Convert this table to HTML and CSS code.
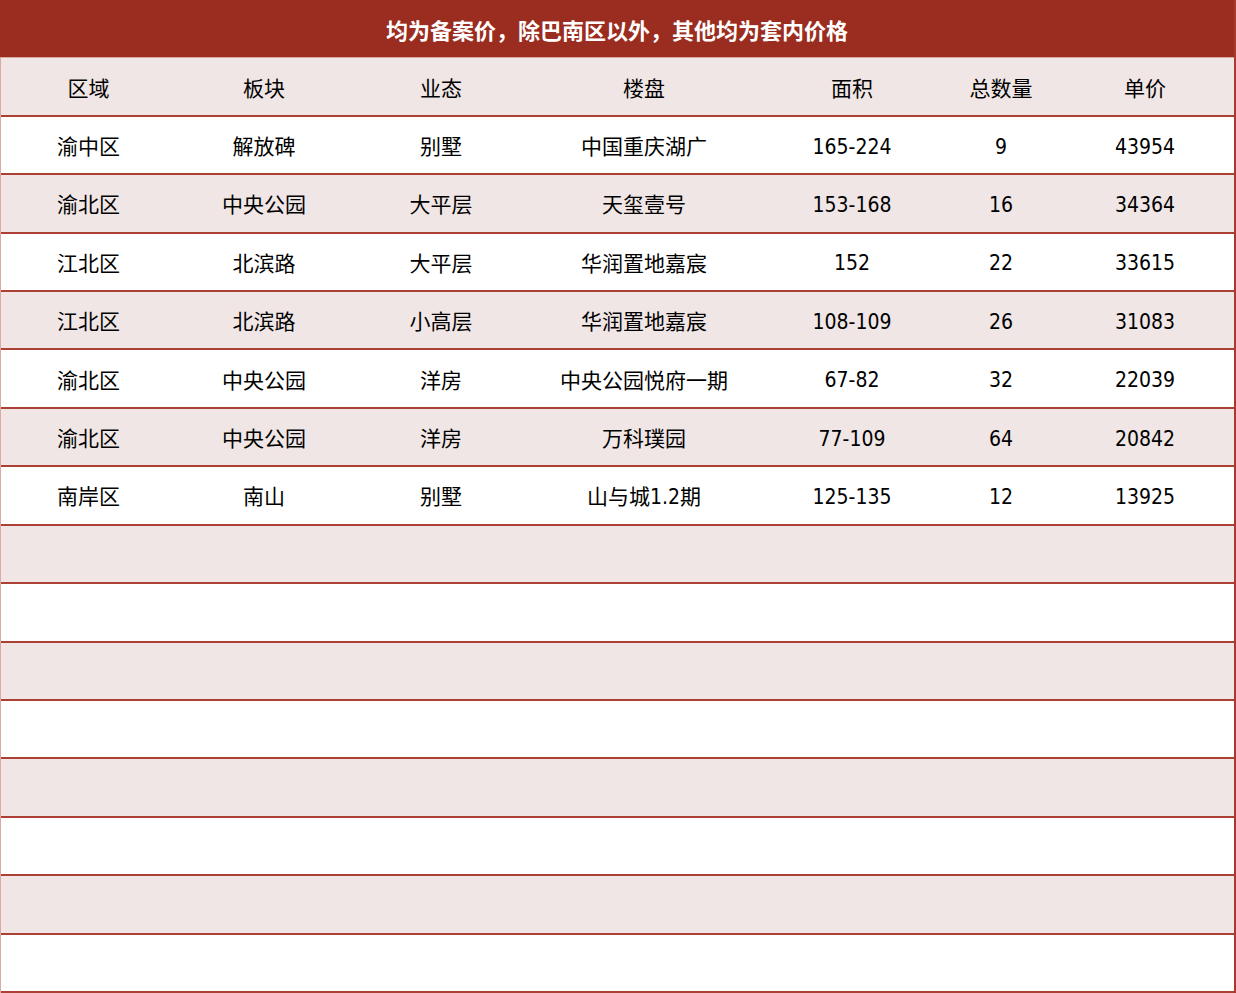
FILE: index.html
```html
<!DOCTYPE html>
<html lang="zh-CN">
<head>
<meta charset="utf-8">
<title>备案价</title>
<link rel="stylesheet" href="styles.css">
</head>
<body>
<div class="sheet">
  <div class="title">均为备案价，除巴南区以外，其他均为套内价格</div>
  <div class="row head">
    <div>区域</div><div>板块</div><div>业态</div><div>楼盘</div><div>面积</div><div>总数量</div><div>单价</div>
  </div>
  <div class="row">
    <div>渝中区</div><div>解放碑</div><div>别墅</div><div>中国重庆湖广</div><div class="num">165-224</div><div class="num">9</div><div class="num">43954</div>
  </div>
  <div class="row alt">
    <div>渝北区</div><div>中央公园</div><div>大平层</div><div>天玺壹号</div><div class="num">153-168</div><div class="num">16</div><div class="num">34364</div>
  </div>
  <div class="row">
    <div>江北区</div><div>北滨路</div><div>大平层</div><div>华润置地嘉宸</div><div class="num">152</div><div class="num">22</div><div class="num">33615</div>
  </div>
  <div class="row alt">
    <div>江北区</div><div>北滨路</div><div>小高层</div><div>华润置地嘉宸</div><div class="num">108-109</div><div class="num">26</div><div class="num">31083</div>
  </div>
  <div class="row">
    <div>渝北区</div><div>中央公园</div><div>洋房</div><div>中央公园悦府一期</div><div class="num">67-82</div><div class="num">32</div><div class="num">22039</div>
  </div>
  <div class="row alt">
    <div>渝北区</div><div>中央公园</div><div>洋房</div><div>万科璞园</div><div class="num">77-109</div><div class="num">64</div><div class="num">20842</div>
  </div>
  <div class="row">
    <div>南岸区</div><div>南山</div><div>别墅</div><div>山与城<span class="n">1.2</span>期</div><div class="num">125-135</div><div class="num">12</div><div class="num">13925</div>
  </div>
  <div class="row alt empty"></div>
  <div class="row empty"></div>
  <div class="row alt empty"></div>
  <div class="row empty"></div>
  <div class="row alt empty"></div>
  <div class="row empty"></div>
  <div class="row alt empty"></div>
  <div class="row empty"></div>
</div>
</body>
</html>
```

FILE: styles.css
```css
html, body {
  margin: 0;
  padding: 0;
  background: #ffffff;
}

.sheet {
  width: 1236px;
  height: 993px;
  box-sizing: border-box;
  display: grid;
  grid-template-rows: repeat(17, 1fr);
  border-left: 1px solid #dcaaa4;
  border-right: 2px solid #a8392d;
  font-family: "Noto Sans CJK SC", sans-serif;
  font-size: 21px;
  color: #000;
}

.title {
  background: #9b2d20;
  color: #ffffff;
  font-weight: 700;
  font-size: 22px;
  display: flex;
  align-items: center;
  justify-content: center;
  border-bottom: 1px solid #d9a6a0;
  margin-left: -1px;
}

.row {
  display: grid;
  grid-template-columns: 175px 176px 178px 228px 188px 110px 1fr;
  align-items: center;
  text-align: center;
  border-bottom: 2px solid #ad4034;
  background: #ffffff;
}

.row.head,
.row.alt {
  background: #f0e6e5;
}

.row > div {
  white-space: nowrap;
}

.num,
.n {
  font-family: "DejaVu Sans Condensed", "DejaVu Sans", sans-serif;
  font-stretch: condensed;
  font-size: 21px;
}

.num {
  padding-top: 3px;
}
```
